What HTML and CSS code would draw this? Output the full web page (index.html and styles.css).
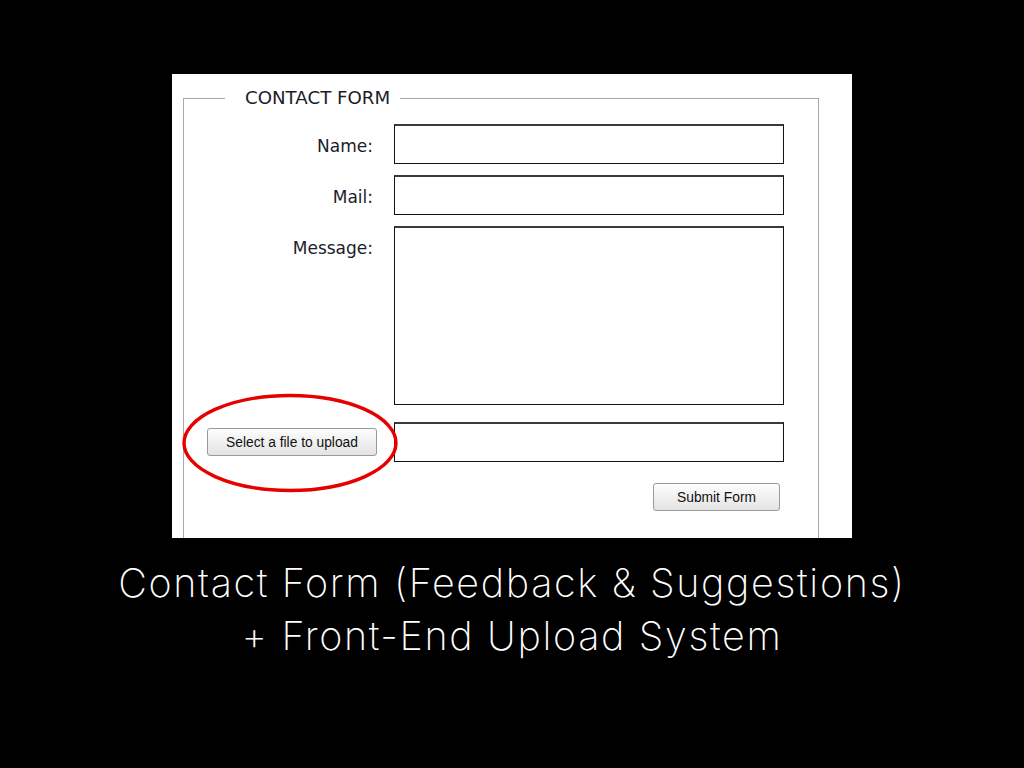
FILE: index.html
```html
<!DOCTYPE html>
<html>
<head>
<meta charset="utf-8">
<link rel="stylesheet" href="styles.css">
</head>
<body>
<div class="slide">
  <div class="panel">
    <fieldset class="form">
      <legend class="legend">CONTACT FORM</legend>
      <div class="grid">
        <label class="label">Name:</label>
        <div class="field"></div>
        <label class="label">Mail:</label>
        <div class="field"></div>
        <label class="label label-msg">Message:</label>
        <div class="field area"></div>
        <div class="file-cell">
          <span class="btn btn-file">Select a file to upload</span>
          <svg class="ring" width="222" height="104" viewBox="0 0 222 104"><ellipse cx="110" cy="52" rx="106" ry="47.5" fill="none" stroke="#e60000" stroke-width="3.4"/></svg>
        </div>
        <div class="field file-field"></div>
        <div></div>
        <div class="submit-row"><span class="btn btn-submit">Submit Form</span></div>
      </div>
    </fieldset>
  </div>
  <div class="caption">
    <div>Contact Form (Feedback &amp; Suggestions)</div>
    <div>+ Front-End Upload System</div>
  </div>
</div>
</body>
</html>
```
FILE: styles.css
```css
html, body {
  margin: 0;
  padding: 0;
  background: #000;
}
.slide {
  width: 1024px;
  height: 768px;
  display: flex;
  flex-direction: column;
  align-items: center;
  overflow: hidden;
}
.panel {
  margin-top: 74px;
  margin-left: 172px;
  align-self: flex-start;
  width: 680px;
  height: 464px;
  box-sizing: border-box;
  background: #fff;
  overflow: hidden;
  padding: 15px 33px 0 11px;
}
.form {
  margin: 0;
  padding: 0;
  border: 1px solid #a9a9a9;
  height: 600px;
  min-width: 0;
}
.legend {
  margin-left: 41px;
  padding: 0 10px 0 20px;
  font-family: "DejaVu Sans", Verdana, sans-serif;
  font-size: 18.2px;
  color: #1c1c2a;
  line-height: 18px;
}
.grid {
  display: grid;
  grid-template-columns: 189px 390px;
  column-gap: 21px;
  margin-top: 17px;
}
.label {
  font-family: "DejaVu Sans", Verdana, sans-serif;
  font-size: 17px;
  color: #1c1c2a;
  text-align: right;
  line-height: 20px;
  padding-top: 12px;
  height: 40px;
  box-sizing: border-box;
}
.field {
  height: 40px;
  box-sizing: border-box;
  border: 1px solid #111;
  border-top: 2px solid #3a3a3a;
  background: #fff;
  margin-bottom: 11px;
}
.area {
  height: 179px;
  margin-bottom: 17px;
}
.file-field {
  margin-bottom: 0;
}
.file-cell {
  position: relative;
  display: flex;
  align-items: center;
}
.btn {
  display: flex;
  align-items: center;
  justify-content: center;
  flex-shrink: 0;
  box-sizing: border-box;
  border: 1px solid #9a9a9a;
  border-radius: 3px;
  background: linear-gradient(#fdfdfd, #f0f0f0 50%, #e3e3e3);
  font-family: "Liberation Sans", Arial, sans-serif;
  font-size: 13.8px;
  color: #111;
}
.btn-file {
  margin-left: 23px;
  width: 170px;
  height: 28px;
}
.ring {
  position: absolute;
  left: -4px;
  top: -31px;
}
.submit-row {
  display: flex;
  justify-content: flex-end;
  padding-top: 21px;
  padding-right: 4px;
}
.btn-submit {
  width: 127px;
  height: 28px;
}
.caption {
  margin-top: 19px;
  font-family: Inter, Roboto, sans-serif;
  font-weight: 250;
  font-size: 39.5px;
  line-height: 53px;
  letter-spacing: 1.65px;
  color: #fff;
  text-align: center;
}
```
